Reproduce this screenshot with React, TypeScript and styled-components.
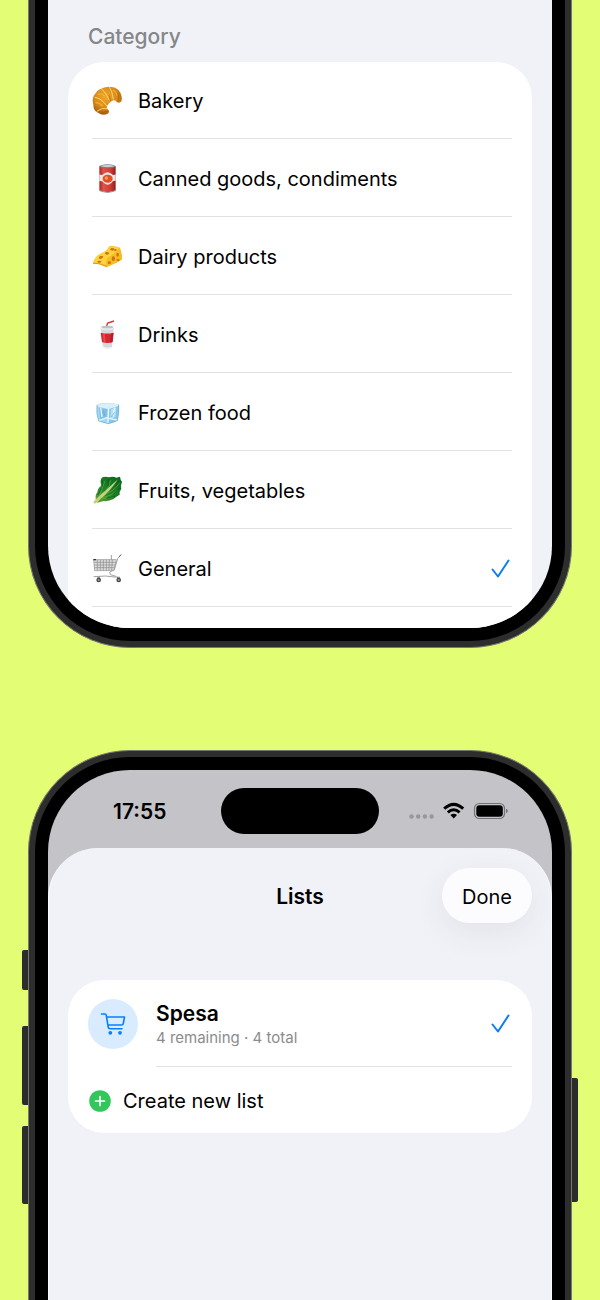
import React, { useState } from "react";
import styled, { createGlobalStyle } from "styled-components";

const GlobalStyle = createGlobalStyle`
  * { box-sizing: border-box; }
  body {
    margin: 0;
    background: #e3fd74;
    color: #000;
    font-family: Inter, "Liberation Sans", sans-serif;
    font-size: 20px;
    line-height: 28px;
  }
  button { font: inherit; color: inherit; border: 0; background: none; padding: 0; text-align: left; cursor: pointer; }
  h1, h2, p, ul { margin: 0; padding: 0; font-weight: inherit; }
  ul { list-style: none; }
`;

const Page = styled.main`
  min-height: 100vh;
  display: flex;
  flex-direction: column;
  gap: 102px;
`;

const Phone = styled.section<{ $end: "top" | "bottom" }>`
  position: relative;
  display: flex;
  margin: 0 28px;
  background: #2d2d2e;
  border: 1px solid #77786f;
  ${(p) =>
    p.$end === "bottom"
      ? "border-top: 0; padding: 0 6px 6px; border-radius: 0 0 102px 102px;"
      : "flex: 1; border-bottom: 0; padding: 6px 6px 0; border-radius: 102px 102px 0 0;"}
`;

const Bezel = styled.div<{ $end: "top" | "bottom" }>`
  flex: 1;
  min-width: 0;
  display: flex;
  background: #000;
  ${(p) =>
    p.$end === "bottom"
      ? "padding: 0 13px 13px; border-radius: 0 0 95px 95px;"
      : "padding: 13px 13px 0; border-radius: 95px 95px 0 0;"}
`;

const Screen = styled.div<{ $end: "top" | "bottom" }>`
  flex: 1;
  min-width: 0;
  display: flex;
  flex-direction: column;
  overflow: hidden;
  background: ${(p) => (p.$end === "bottom" ? "#f1f2f7" : "#c4c3c8")};
  border-radius: ${(p) => (p.$end === "bottom" ? "0 0 82px 82px" : "82px 82px 0 0")};
`;

const SideKey = styled.span<{ $side: "left" | "right"; $top: number; $length: number }>`
  position: absolute;
  ${(p) => p.$side}: -7px;
  top: ${(p) => p.$top}px;
  width: 6px;
  height: ${(p) => p.$length}px;
  background: #2b2c2b;
  border-radius: ${(p) => (p.$side === "left" ? "2px 0 0 2px" : "0 2px 2px 0")};
`;

const GroupTitle = styled.h2`
  padding: 23px 40px 11px;
  color: #85868a;
  font-size: 21px;
  font-weight: 500;
`;

const CategoryList = styled.ul`
  margin: 0 20px;
  padding: 0 20px 21px 24px;
  background: #fff;
  border-radius: 36px 36px 0 0;
`;

const CategoryItem = styled.li`
  height: 78px;
  border-bottom: 1px solid #e2e2e4;
  &:first-child { height: 77px; }
`;

const CategoryLabel = styled.label`
  position: relative;
  height: 100%;
  padding-top: 2px;
  display: flex;
  align-items: center;
  gap: 16px;
  cursor: pointer;
  span { flex: 1; }
`;

const Radio = styled.input`
  position: absolute;
  inset: 0;
  margin: 0;
  appearance: none;
  cursor: pointer;
`;

const StatusBar = styled.header`
  height: 78px;
  padding: 4px 44px 0 65px;
  display: grid;
  grid-template-columns: 1fr 158px 1fr;
  align-items: center;
`;

const Clock = styled.time`
  padding-top: 2px;
  font-size: 21px;
  font-weight: 600;
`;

const Island = styled.div`
  height: 46px;
  margin-left: -11px;
  margin-right: 11px;
  border-radius: 23px;
  background: #000;
`;

const Indicators = styled.div`
  display: flex;
  justify-content: flex-end;
`;

const Sheet = styled.div`
  flex: 1;
  padding: 20px 19px;
  background: #f1f2f7;
  border: solid #fafafd;
  border-width: 0 1px;
  border-radius: 50px 50px 0 0;
`;

const TitleBar = styled.div`
  display: grid;
  grid-template-columns: 1fr auto 1fr;
  align-items: center;
  margin-bottom: 57px;
`;

const Title = styled.h1`
  grid-column: 2;
  padding-top: 2px;
  font-size: 21px;
  font-weight: 600;
`;

const DoneButton = styled.button`
  justify-self: end;
  height: 55px;
  padding: 2px 20px 0;
  border-radius: 28px;
  background: #fcfcff;
  box-shadow: 0 10px 32px rgba(60, 60, 80, 0.08);
`;

const Card = styled.div`
  padding: 0 20px;
  background: #fff;
  border-radius: 36px;
`;

const ListRow = styled.button`
  width: 100%;
  height: 87px;
  display: flex;
  align-items: stretch;
  gap: 18px;
`;

const Avatar = styled.span`
  align-self: center;
  width: 50px;
  height: 50px;
  display: grid;
  place-items: center;
  border-radius: 50%;
  background: #d9ebfe;
`;

const ListBody = styled.span`
  flex: 1;
  padding-top: 2px;
  display: flex;
  align-items: center;
  justify-content: space-between;
  border-bottom: 1px solid #e2e2e4;
`;

const ListText = styled.span`
  display: flex;
  flex-direction: column;
`;

const ListName = styled.strong`
  font-size: 21px;
  font-weight: 600;
`;

const ListMeta = styled.small`
  color: #8b8b8e;
  font-size: 15px;
  line-height: 20px;
`;

const CreateRow = styled.button`
  width: 100%;
  height: 66px;
  padding-top: 2px;
  display: flex;
  align-items: center;
  gap: 11px;
`;

const Check = () => (
  <svg width="22" height="24" viewBox="0 0 22 24" fill="none" stroke="#0a7df5" strokeWidth="2" strokeLinecap="round" strokeLinejoin="round" aria-hidden="true">
    <path d="M2.5 12.5 8 19.5 18.5 3.5" />
  </svg>
);

const Emoji = ({ children }: { children: React.ReactNode }) => (
  <svg width="30" height="30" viewBox="0 0 90 90" aria-hidden="true">
    {children}
  </svg>
);

const Croissant = () => (
  <Emoji>
    <defs>
      <radialGradient id="crust" cx="45%" cy="35%" r="65%">
        <stop offset="0" stopColor="#f0a828" />
        <stop offset="0.6" stopColor="#d98a1a" />
        <stop offset="1" stopColor="#a55b0e" />
      </radialGradient>
    </defs>
    <path d="M24 10Q40 0 58 3Q77 5 85 20Q92 35 88 46Q83 53 75 49Q69 40 61 44Q50 50 45 60Q43 68 49 72Q55 78 46 84Q31 90 18 80Q4 74 4 56Q-2 34 11 22Q15 13 24 10Z" fill="url(#crust)" />
    <path d="M29 9Q44 22 52 43M8 34Q28 36 45 61M52 3Q61 15 64 40M14 76Q30 64 45 68" fill="none" stroke="#f9d674" strokeWidth="3" />
    <path d="M17 25Q28 20 38 31M63 12Q73 17 75 29M10 50Q23 50 32 60" fill="none" stroke="#f8bc3d" strokeWidth="4" opacity=".7" />
    <path d="M78 20Q82 31 78 47M27 84Q37 76 47 76M50 27Q55 35 55 45" fill="none" stroke="#9d5710" strokeWidth="3" opacity=".6" />
  </Emoji>
);

const Can = () => (
  <Emoji>
    <defs>
      <linearGradient id="tin">
        <stop offset="0" stopColor="#a52925" />
        <stop offset="0.25" stopColor="#e0524a" />
        <stop offset="0.7" stopColor="#cf3a35" />
        <stop offset="1" stopColor="#8d201e" />
      </linearGradient>
    </defs>
    <path d="M22 7V79Q47 90 71 79V7Z" fill="url(#tin)" />
    <path d="M22 31Q30 36 36 29Q47 20 58 29Q64 36 71 31V51Q63 49 58 57Q47 68 36 57Q31 49 22 52Z" fill="#eee5e1" />
    <ellipse cx="47" cy="44" rx="15" ry="12" fill="#e94b25" />
    <circle cx="43" cy="42" r="5" fill="#ff9b69" />
    <path d="M47 32 43 35 39 34 43 37 47 35 52 38 55 34 50 34Z" fill="#8a7a35" />
    <ellipse cx="46.500" cy="7" rx="24.500" ry="6" fill="#777c7e" />
    <ellipse cx="46.500" cy="6" rx="20" ry="3.500" fill="#c9cdcd" />
    <path d="M22 78Q47 90 71 78V81Q47 91 22 81Z" fill="#8b8080" />
  </Emoji>
);

const Cheese = () => (
  <Emoji>
    <path d="M3 64Q10 43 24 36Q43 31 52 13Q62 9 84 17Q88 31 92 50Q85 59 44 75Q22 66 3 64Z" fill="#f5b820" />
    <path d="M3 62Q11 41 25 35Q43 31 52 13L82 17Q72 33 55 43Q41 47 42 68Z" fill="#ffd33d" />
    <path d="M42 68Q43 48 56 43Q72 34 83 17L92 50Q87 57 44 75Z" fill="#f9bd24" />
    <g fill="#cb7710">
      <ellipse cx="27" cy="46" rx="7" ry="4" transform="rotate(-25 27 46)" />
      <ellipse cx="45" cy="34" rx="6" ry="4" />
      <ellipse cx="61" cy="22" rx="6" ry="4" />
      <ellipse cx="22" cy="59" rx="6" ry="3" />
      <ellipse cx="64" cy="50" rx="5" ry="7" />
      <ellipse cx="77" cy="38" rx="4" ry="6" />
      <ellipse cx="52" cy="62" rx="5" ry="4" />
      <ellipse cx="78" cy="54" rx="5" ry="3" />
      <ellipse cx="70" cy="24" rx="4" ry="3" />
    </g>
    <path d="M3 64 23 65 44 74" fill="none" stroke="#e49c16" strokeWidth="3" />
  </Emoji>
);

const Drink = () => (
  <Emoji>
    <path d="M43 21 47 9 66 3" fill="none" stroke="#cf3437" strokeWidth="4" />
    <path d="M27 25H65L60 82Q46 89 32 82Z" fill="#d7d8dc" />
    <path d="M26 38Q46 43 65 38L62 66Q46 72 30 66Z" fill="#d9252d" />
    <path d="M32 41 35 67 41 68 38 41Z" fill="#f16464" opacity=".6" />
    <path d="M57 41 54 68 61 66 64 39Z" fill="#b81c25" />
    <path d="M25 22Q46 16 66 22V28Q46 34 25 28Z" fill="#e8e8eb" />
    <ellipse cx="46" cy="21" rx="18" ry="4" fill="#c1c2c8" />
    <path d="M32 75 34 82Q45 86 57 83" fill="none" stroke="#f6f6f8" strokeWidth="3" />
  </Emoji>
);

const Ice = () => (
  <Emoji>
    <path d="M15 21Q26 14 46 15Q68 14 80 20Q82 48 76 68Q60 76 49 77Q32 74 20 69Q12 48 15 21Z" fill="#a5d7f2" />
    <path d="M15 21Q47 11 80 20L51 29Z" fill="#d7f1fc" />
    <path d="M51 29 80 20Q82 47 76 68L49 77Z" fill="#8ac6e8" />
    <path d="M21 29 46 34 44 59 25 66Z" fill="#80bee2" />
    <path d="M57 34 73 28 70 57 55 63Z" fill="#b6e1f6" />
    <path d="M17 23 50 31 78 22M50 31 48 74M22 67 44 59 50 61 75 66M26 29 30 57M68 29 63 54" fill="none" stroke="#e3f7ff" strokeWidth="4" />
    <path d="M15 21Q12 48 20 69L49 77 76 68Q82 47 80 20M34 39 38 53M58 57 67 43" fill="none" stroke="#66a9d0" strokeWidth="2" />
  </Emoji>
);

const Leaf = () => (
  <Emoji>
    <defs>
      <linearGradient id="leaf" x1="0" y1="1" x2="1" y2="0">
        <stop offset="0" stopColor="#6fa238" />
        <stop offset="0.4" stopColor="#1f852a" />
        <stop offset="1" stopColor="#08631d" />
      </linearGradient>
    </defs>
    <path d="M12 72Q8 58 16 49Q17 36 28 29Q22 12 31 4Q42 0 50 4Q63 0 73 5L84 2Q85 12 90 17Q85 29 88 38Q81 47 83 56Q72 62 65 69Q48 77 35 75L16 80Z" fill="url(#leaf)" />
    <path d="M5 76Q15 67 24 58Q47 38 78 10Q55 45 25 70Q17 81 8 83Q3 81 5 76Z" fill="#c3d27c" />
    <path d="M22 61Q31 35 38 16M37 48Q54 33 56 13M31 65Q54 62 77 43M46 52Q70 42 82 22M25 67Q48 70 65 62" fill="none" stroke="#6fae43" strokeWidth="2" />
    <path d="M30 32Q34 23 31 13M48 30Q47 19 50 9M64 55 83 36M44 67 70 60M71 31 80 13M18 56 28 38" fill="none" stroke="#07521b" strokeWidth="3" opacity=".7" />
  </Emoji>
);

const Trolley = () => (
  <Emoji>
    <path d="M6 17H72L66 48H8Z" fill="#dedede" />
    <path d="M5 17H73L66 49 8 50ZM7 25H71M7 33H70M8 41H68M16 17V49M25 17V49M34 17V49M43 17V49M52 17 51 49M61 17 59 49" fill="none" stroke="#85878a" strokeWidth="2" />
    <path d="M87 2 77 14 67 48 53 54 55 62 72 67M6 68 40 66 78 70M58 4V17" fill="none" stroke="#a0a2a4" strokeWidth="3" strokeLinecap="round" />
    <path d="M4 17H12" stroke="#343538" strokeWidth="4" />
    <path d="M81 9 87 2" stroke="#6b6d70" strokeWidth="3" />
    <circle cx="20" cy="78" r="7" fill="#46484b" />
    <circle cx="80" cy="78" r="7" fill="#46484b" />
    <circle cx="20" cy="78" r="3" fill="#a1a2a4" />
    <circle cx="80" cy="78" r="3" fill="#a1a2a4" />
    <path d="M16 70H24M75 70H84" stroke="#777" strokeWidth="3" />
  </Emoji>
);

const CartIcon = () => (
  <svg width="26" height="24" viewBox="0 0 26 24" fill="none" stroke="#0a80f7" strokeWidth="1.600" strokeLinecap="round" strokeLinejoin="round" aria-hidden="true">
    <path d="M1.500 2H5Q6 2 6.300 3.500L8.200 15Q8.500 16.800 10 16.800H22M6.600 5H24.500L23.300 11.500Q23 13 21.500 13H8" />
    <circle cx="10.300" cy="20.800" r="1.100" fill="#0a80f7" />
    <circle cx="20" cy="20.800" r="1.100" fill="#0a80f7" />
  </svg>
);

const PlusIcon = () => (
  <svg width="24" height="24" viewBox="0 0 24 24" aria-hidden="true">
    <circle cx="12" cy="12" r="10.800" fill="#32c75a" />
    <path d="M12 7.500V16.500M7.500 12H16.500" stroke="#fff" strokeWidth="1.700" strokeLinecap="round" />
  </svg>
);

const StatusIcons = () => (
  <svg width="100" height="20" viewBox="0 0 100 20" aria-hidden="true">
    <g fill="#97979c">
      <circle cx="3.500" cy="15.500" r="2.200" />
      <circle cx="10.200" cy="15.500" r="2.200" />
      <circle cx="16.900" cy="15.500" r="2.200" />
      <circle cx="23.600" cy="15.500" r="2.200" />
    </g>
    <g fill="none" stroke="#000" strokeWidth="3">
      <path d="M36.200 7.600Q45.700-.9 55.200 7.600" />
      <path d="M39.800 11.300Q45.700 6.200 51.600 11.300" />
    </g>
    <path d="M42.400 14Q45.700 11.300 49 14L45.700 17.500Z" />
    <rect x="66.500" y="2.500" width="30" height="15" rx="4.800" fill="none" stroke="#727277" strokeWidth="1.200" />
    <rect x="68.300" y="4.300" width="26.500" height="11.400" rx="3.200" />
    <path d="M98 7.800Q99.800 8.500 99.800 10T98 12.200Z" fill="#727277" />
  </svg>
);

const categories = [
  { name: "Bakery", Icon: Croissant },
  { name: "Canned goods, condiments", Icon: Can },
  { name: "Dairy products", Icon: Cheese },
  { name: "Drinks", Icon: Drink },
  { name: "Frozen food", Icon: Ice },
  { name: "Fruits, vegetables", Icon: Leaf },
  { name: "General", Icon: Trolley },
];

export default function App() {
  const [selected, setSelected] = useState("General");
  return (
    <Page>
      <GlobalStyle />
      <Phone $end="bottom">
        <Bezel $end="bottom">
          <Screen $end="bottom">
            <GroupTitle>Category</GroupTitle>
            <CategoryList>
              {categories.map(({ name, Icon }) => (
                <CategoryItem key={name}>
                  <CategoryLabel>
                    <Radio type="radio" name="category" checked={selected === name} onChange={() => setSelected(name)} />
                    <Icon />
                    <span>{name}</span>
                    {selected === name && <Check />}
                  </CategoryLabel>
                </CategoryItem>
              ))}
            </CategoryList>
          </Screen>
        </Bezel>
      </Phone>
      <Phone $end="top">
        <SideKey $side="left" $top={199} $length={40} />
        <SideKey $side="left" $top={275} $length={79} />
        <SideKey $side="left" $top={375} $length={78} />
        <SideKey $side="right" $top={327} $length={124} />
        <Bezel $end="top">
          <Screen $end="top">
            <StatusBar>
              <Clock>17:55</Clock>
              <Island />
              <Indicators>
                <StatusIcons />
              </Indicators>
            </StatusBar>
            <Sheet>
              <TitleBar>
                <Title>Lists</Title>
                <DoneButton type="button">Done</DoneButton>
              </TitleBar>
              <Card>
                <ListRow type="button">
                  <Avatar>
                    <CartIcon />
                  </Avatar>
                  <ListBody>
                    <ListText>
                      <ListName>Spesa</ListName>
                      <ListMeta>4 remaining · 4 total</ListMeta>
                    </ListText>
                    <Check />
                  </ListBody>
                </ListRow>
                <CreateRow type="button">
                  <PlusIcon />
                  Create new list
                </CreateRow>
              </Card>
            </Sheet>
          </Screen>
        </Bezel>
      </Phone>
    </Page>
  );
}
